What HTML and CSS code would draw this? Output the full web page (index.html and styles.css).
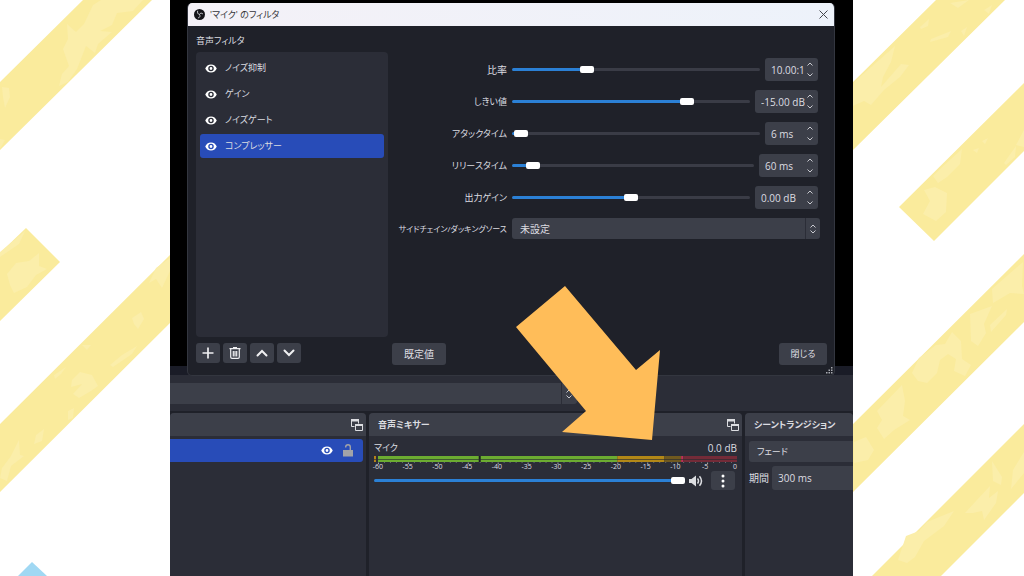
FILE: index.html
```html
<!DOCTYPE html>
<html lang="ja">
<head>
<meta charset="utf-8">
<meta name="viewport" content="width=device-width, initial-scale=1">
<title>音声フィルタ</title>
<link rel="stylesheet" href="styles.css">
</head>
<body>
<svg class="defs" aria-hidden="true">
  <symbol id="eye" viewBox="0 0 24 18"><path fill="currentColor" fill-rule="evenodd" d="M12 1C6.500 1 2.300 4.300.5 9c1.800 4.700 6 8 11.500 8s9.700-3.300 11.500-8C21.700 4.300 17.500 1 12 1Zm0 13.500a5.500 5.500 0 1 1 0-11 5.500 5.500 0 0 1 0 11Zm0-2.700a2.800 2.800 0 1 0 0-5.600 2.800 2.800 0 0 0 0 5.600Z"/></symbol>
  <symbol id="up" viewBox="0 0 12 8"><path d="M1.500 6.500 6 2l4.500 4.500" fill="none" stroke="currentColor" stroke-width="2" stroke-linecap="round"/></symbol>
  <symbol id="down" viewBox="0 0 12 8"><path d="M1.500 1.500 6 6l4.500-4.500" fill="none" stroke="currentColor" stroke-width="2" stroke-linecap="round"/></symbol>
  <symbol id="popout" viewBox="0 0 12 12"><path fill="none" stroke="currentColor" d="M3.500 7.500h-3v-6h7v3M4.500 5.500h7v6h-7z"/><path fill="currentColor" d="M0 0h8v2.500H0zM4 5h8v2H4z"/></symbol>
</svg>

<svg class="backdrop" viewBox="0 0 1024 576" preserveAspectRatio="none" aria-hidden="true">
  <g class="stripe">
    <path d="M83 0h69L0 150V82ZM0 253l26-25 34 34-60 59ZM0 424l171-170v68L0 492Z"/>
    <path d="M936 0h69L852 151V83ZM1024 83 899 207l35 34 90-90ZM852 425l172-171v68L852 493ZM872 576l152-152v69l-83 83Z"/>
  </g>
  <g class="fleck">
    <path d="M93 5l8-5h42l-10 11-16 2-5 12-12 6 12 1-14 12-3 9-9-7-9 23-9 13-9 4 3-12 7-8-6-17 5-10-1-15 9 8 8-8Z"/>
    <path d="M2 87l7 1 1 9-5 11-2-11ZM0 139l5 1-5 9ZM0 252l25-21-6 13-19 13ZM7 274l9-11 13-2 10-8 0 13 8 3-11 6-9 12-13 6-4-8Z"/>
    <path d="M170 258v13l-8 17-6-9-7 4 7-15ZM132 318l9-6 3 7-6 10-4-5ZM110 365l12-10 15-9-5 8-19 13ZM72 380l8-8 12 3 6 11-7 5-12 7-6-4 9-10-11 3ZM54 375l12-8-5 7-6 5ZM82 345l9 0-4 5ZM68 411l6-3-1 10-5 2ZM36 435l8-6-2 12-8 3ZM2 468l9-12 8-16 1 15 4 1-13 10-4 15-7-3Z"/>
    <path d="M950 3l19-3-11 8ZM984 10l8-5-3 9ZM920 27l9-8-1 7-7 3ZM931 39l20-8-3 6-18 5ZM961 31l6-4-3 9ZM854 82l41-36-4 16-8 15-2 10 20-23 8 1-9 12-16 13-13 15-7-4-16 7Z"/>
    <path d="M940 169l22-20-2 15-13 13-9 6-5-7ZM982 141l6-3-3 6ZM973 150l6-2-2 5ZM1004 163l12-17-1 11-9 8ZM1016 145l8-15v17ZM924 190l11-3 12 6-1 19-10 9-13-7 7-13Z"/>
    <path d="M992 289l31-27-1 24 2 8-14-1-17 10ZM970 314l22-8-8 18 2 9-8 13-7-5ZM990 325l17-16-1 6-15 17ZM952 332l9 9 1 18 9 6-6 11-11-5 2-12-8-5-8 6-3 13-10 10-9-2-6-8 7-15 17-13 9-1ZM877 411l25-26 3 16-2 15 7 4-16 10-10 9-7-11 5-8ZM854 442l12-5 8 13-6 10-14 3Z"/>
    <path d="M898 560l8-24 13-5 8-9 27-11-10 15-20 15-9 16-8 6ZM965 513l11-12 14-15-1 12 9-7-2 12-12 17-2-9-9 2ZM992 461l10 16-1 8-8-4ZM1013 470l11-18v21l-13 16Z"/>
  </g>
  <path class="gem" d="m32 562 15 14H18Z"/>
</svg>

<main class="desktop">
  <section class="studio" aria-label="OBS">
    <div class="context-bar">
      <div class="source-field"></div>
      <button class="source-arrows" aria-label="選択"><svg class="chev"><use href="#up"/></svg><svg class="chev"><use href="#down"/></svg></button>
    </div>
    <div class="docks">
      <section class="dock" aria-label="ソース">
        <header class="dock-head"><span></span><button class="pop" aria-label="切り離す"><svg class="pop-icon"><use href="#popout"/></svg></button></header>
        <div class="source-row">
          <svg class="eye"><use href="#eye"/></svg>
          <svg class="lock" viewBox="0 0 10 13"><path fill="currentColor" d="M0 6h10v6.500H0z"/><path d="M2.700 3.500V3a2.300 2.300 0 0 1 4.600 0v3" fill="none" stroke="currentColor" stroke-width="1.400"/></svg>
        </div>
      </section>
      <section class="dock" aria-label="音声ミキサー">
        <header class="dock-head"><h2 class="dock-title">音声ミキサー</h2><button class="pop" aria-label="切り離す"><svg class="pop-icon"><use href="#popout"/></svg></button></header>
        <div class="channel">
          <div class="channel-top"><label class="kana" for="vol">マイク</label><span>0.0 dB</span></div>
          <svg class="meter" viewBox="0 0 364 9" preserveAspectRatio="none" aria-hidden="true">
            <path fill="#b7821a" d="M0 0h2v6H0z"/><path fill="#6cac31" d="M4 0h240v6H4z"/><path fill="#b38817" d="M244 0h47v6h-47z"/><path fill="#70591f" d="M291 0h17v6h-17z"/><path fill="#bd3157" d="M308 0h2v6h-2z"/><path fill="#742b38" d="M310 0h54v6h-54z"/>
            <path fill="#1b1d20" d="M105 0h2v6h-2z"/><path stroke="#282b31" stroke-opacity=".65" d="M0 3.500h364"/>
            <path stroke="#a6a8ad" stroke-dasharray="1 29" d="M4 7.500h360"/><path stroke="#666973" stroke-dasharray="1 5" d="M4 6.500h360"/>
          </svg>
          <div class="scale"><span>-60</span><span>-55</span><span>-50</span><span>-45</span><span>-40</span><span>-35</span><span>-30</span><span>-25</span><span>-20</span><span>-15</span><span>-10</span><span>-5</span><span>0</span></div>
          <div class="volume">
            <input class="slider" id="vol" type="range" value="100" style="--v:100">
            <svg class="speaker" viewBox="0 0 14 12"><path fill="currentColor" d="M0 4h2.500L7 .5v11L2.500 8H0z"/><path fill="none" stroke="currentColor" stroke-width="1.500" d="M8.500 3.500q2 2.500 0 5M10.500 1.200q4 4.800 0 9.600"/></svg>
            <button class="more" aria-label="メニュー"><svg class="dots" viewBox="0 0 4 14"><circle cx="2" cy="2" r="1.500"/><circle cx="2" cy="7" r="1.500"/><circle cx="2" cy="12" r="1.500"/></svg></button>
          </div>
        </div>
      </section>
      <section class="dock" aria-label="シーントランジション">
        <header class="dock-head"><h2 class="dock-title">シーントランジション</h2></header>
        <div class="transition">
          <select class="fade" aria-label="トランジション"><option>フェード</option></select>
          <div class="duration"><label for="dur">期間</label><input id="dur" class="dur-box" type="text" value="300 ms"></div>
        </div>
      </section>
    </div>
  </section>

  <section class="dialog" role="dialog" aria-labelledby="dlg-title">
    <header class="titlebar">
      <svg class="logo" viewBox="0 0 24 24"><circle cx="12" cy="12" r="12" fill="#15151a"/><g fill="none" stroke="#e8e8ee" stroke-width="1.800"><path d="M8 4c-1 4 0 7 4 8"/><path d="M19.500 11c-3-3-6-2.500-7.500 1"/><path d="M9 19.500c4-1 5-4 3-7.500"/></g></svg>
      <h1 class="dlg-title" id="dlg-title">'マイク' のフィルタ</h1>
      <button class="close-x" aria-label="閉じる"><svg class="x-icon" viewBox="0 0 9 9"><path d="m.5.5 8 8m0-8-8 8" stroke="currentColor" fill="none"/></svg></button>
    </header>
    <div class="dlg-body">
      <div class="filters">
        <h2 class="filters-title">音声フィルタ</h2>
        <ul class="filter-list">
          <li class="filter"><svg class="eye"><use href="#eye"/></svg>ノイズ抑制</li>
          <li class="filter"><svg class="eye"><use href="#eye"/></svg>ゲイン</li>
          <li class="filter"><svg class="eye"><use href="#eye"/></svg>ノイズゲート</li>
          <li class="filter selected"><svg class="eye"><use href="#eye"/></svg>コンプレッサー</li>
        </ul>
        <div class="tools">
          <button class="tool" aria-label="追加"><svg class="tool-icon" viewBox="0 0 12 12"><path d="M6 .5v11M.5 6h11" stroke="currentColor" stroke-width="1.700"/></svg></button>
          <button class="tool" aria-label="削除"><svg class="tool-icon" viewBox="0 0 12 12"><path d="M.5 1.700h11M4 .7h4M1.700 2v8q0 1.300 1.300 1.300h6q1.300 0 1.300-1.300V2M4.300 4v5.500M6 4v5.500M7.700 4v5.500" fill="none" stroke="currentColor" stroke-width="1.200"/></svg></button>
          <button class="tool" aria-label="上へ"><svg class="tool-chev"><use href="#up"/></svg></button>
          <button class="tool" aria-label="下へ"><svg class="tool-chev"><use href="#down"/></svg></button>
        </div>
      </div>
      <div class="settings">
        <form class="form">
          <label class="name" for="ratio">比率</label>
          <div class="control"><input class="slider" id="ratio" type="range" value="29" style="--v:29"><div class="spin"><input class="spin-box w-s" type="text" value="10.00:1" aria-label="比率の値"><span class="steps"><button type="button" class="step" aria-label="増"><svg class="chev"><use href="#up"/></svg></button><button type="button" class="step" aria-label="減"><svg class="chev"><use href="#down"/></svg></button></span></div></div>
          <label class="name kana" for="thr">しきい値</label>
          <div class="control"><input class="slider" id="thr" type="range" value="75" style="--v:75"><div class="spin"><input class="spin-box w-l" type="text" value="-15.00 dB" aria-label="しきい値の値"><span class="steps"><button type="button" class="step" aria-label="増"><svg class="chev"><use href="#up"/></svg></button><button type="button" class="step" aria-label="減"><svg class="chev"><use href="#down"/></svg></button></span></div></div>
          <label class="name kana" for="att">アタックタイム</label>
          <div class="control"><input class="slider" id="att" type="range" value="1" style="--v:1"><div class="spin"><input class="spin-box w-s" type="text" value="6 ms" aria-label="アタックタイムの値"><span class="steps"><button type="button" class="step" aria-label="増"><svg class="chev"><use href="#up"/></svg></button><button type="button" class="step" aria-label="減"><svg class="chev"><use href="#down"/></svg></button></span></div></div>
          <label class="name kana" for="rel">リリースタイム</label>
          <div class="control"><input class="slider" id="rel" type="range" value="6" style="--v:6"><div class="spin"><input class="spin-box w-m" type="text" value="60 ms" aria-label="リリースタイムの値"><span class="steps"><button type="button" class="step" aria-label="増"><svg class="chev"><use href="#up"/></svg></button><button type="button" class="step" aria-label="減"><svg class="chev"><use href="#down"/></svg></button></span></div></div>
          <label class="name kana" for="out">出力ゲイン</label>
          <div class="control"><input class="slider" id="out" type="range" value="50" style="--v:50"><div class="spin"><input class="spin-box w-l" type="text" value="0.00 dB" aria-label="出力ゲインの値"><span class="steps"><button type="button" class="step" aria-label="増"><svg class="chev"><use href="#up"/></svg></button><button type="button" class="step" aria-label="減"><svg class="chev"><use href="#down"/></svg></button></span></div></div>
          <label class="name long" for="side">サイドチェイン/ダッキングソース</label>
          <div class="combo"><select class="combo-box" id="side"><option>未設定</option></select><span class="combo-arrows"><svg class="chev"><use href="#up"/></svg><svg class="chev"><use href="#down"/></svg></span></div>
        </form>
        <div class="actions"><button class="btn wide">既定値</button><button class="btn kana">閉じる</button></div>
      </div>
    </div>
    <svg class="grip" viewBox="0 0 7 7"><path fill="#a9abb2" d="M5 0h1.500v1.500H5zM5 2.500h1.500V4H5zM2.500 2.500H4V4H2.500zM5 5h1.500v1.500H5zM2.500 5H4v1.500H2.500zM0 5h1.500v1.500H0z"/></svg>
  </section>

  <svg class="pointer" viewBox="0 0 145 154" aria-hidden="true"><path fill="#ffbd59" d="m49 0 71 84 24-20-8 90-90-8 24-21L0 41Z"/></svg>
</main>
</body>
</html>
```
FILE: styles.css
```css
:root {
  --ink: #dcdde1;
  --base: #1f2129;
  --panel: #2b2d37;
  --raised: #3c3f49;
  --select: #284cb8;
  --accent: #2b80d5;
}
* { box-sizing: border-box; }
body {
  margin: 0;
  min-height: 100vh;
  background: #fff;
  color: var(--ink);
  font: 10px/14px "Open Sans", "Noto Sans CJK JP", sans-serif;
  font-feature-settings: "palt";
  overflow: hidden;
}
button, input, select {
  margin: 0;
  padding: 0;
  border: 0;
  background: none;
  color: inherit;
  font: inherit;
  font-feature-settings: inherit;
  appearance: none;
  outline: 0;
  border-radius: 0;
}
h1, h2, ul { margin: 0; padding: 0; font-size: 9px; font-weight: 400; list-style: none; }
svg { display: block; flex: none; }
.kana { font-size: 9px; }
.defs { position: absolute; width: 0; height: 0; }
.backdrop { position: absolute; inset: 0; width: 100%; height: 100%; }
.stripe { fill: #faeb9c; }
.fleck { fill: #fbeeaa; }
.gem { fill: #a0d8f3; }

.desktop {
  position: relative;
  width: 66.7%;
  height: 100vh;
  margin-left: 16.6%;
  background: #000;
  overflow: hidden;
}

/* main window */
.studio {
  position: absolute;
  inset: 366px 0 0;
  display: flex;
  flex-direction: column;
  background: var(--base);
  border-top: 9px solid #1a1c27;
}
.context-bar { display: flex; gap: 1px; padding: 8px 0 7px; background: var(--panel); }
.source-field { width: 391px; height: 21px; background: var(--raised); }
.source-arrows {
  width: 15px;
  background: var(--raised);
  border-radius: 0 3px 3px 0;
  display: grid;
  place-content: center;
  gap: 2px;
}
.docks { flex: 1; display: grid; grid-template-columns: 196px 1fr 108px; gap: 3px; padding-top: 2px; }
.dock { background: var(--panel); border-radius: 4px 4px 0 0; min-width: 0; overflow: hidden; }
.dock-head {
  display: flex;
  align-items: center;
  justify-content: space-between;
  height: 23px;
  padding: 0 3px 0 9px;
  background: var(--raised);
}
.dock-title { font-weight: 700; white-space: nowrap; }
.pop-icon { width: 12px; height: 12px; }
.source-row {
  display: flex;
  align-items: center;
  justify-content: flex-end;
  gap: 10px;
  height: 23px;
  margin: 3px 3px 0 0;
  padding-right: 10px;
  background: var(--select);
  border-radius: 0 3px 3px 0;
  color: #fff;
}
.eye { width: 12px; height: 9px; }
.lock { width: 10px; height: 13px; color: #a2a3a8; }
.channel { padding: 5px 5px 0; }
.channel-top { display: flex; justify-content: space-between; }
.meter { width: 100%; height: 9px; margin-top: 1px; }
.scale {
  display: flex;
  justify-content: space-between;
  padding: 0 2px 0 4px;
  font-size: 7px;
  line-height: 4px;
}
.scale span { width: 0; display: flex; justify-content: center; }
.volume { display: flex; align-items: center; margin-top: 2px; padding-right: 2px; }
.speaker { width: 14px; height: 12px; margin: 0 8px 0 4px; }
.more { width: 24px; height: 19px; background: var(--raised); border-radius: 3px; display: grid; place-items: center; }
.dots { width: 4px; height: 14px; fill: #fff; }
.transition { padding: 5px 0 0 4px; }
.fade { display: block; width: 100%; height: 21px; padding-left: 8px; background: var(--raised); border-radius: 3px 0 0 3px; font-size: 9px; }
.duration { display: flex; align-items: center; gap: 3px; margin-top: 4px; }
.duration label { flex: none; }
.dur-box { flex: 1; min-width: 0; height: 24px; padding-left: 6px; background: var(--raised); border-radius: 3px 0 0 3px; }

/* slider */
.slider {
  --pos: calc(7px + (100% - 14px) * var(--v) / 100);
  flex: 1;
  min-width: 0;
  height: 14px;
}
.slider::-webkit-slider-runnable-track {
  height: 3px;
  border-radius: 2px;
  background: linear-gradient(var(--accent), var(--accent)) 0 0 / var(--pos) 100% no-repeat #3a3c46;
}
.slider::-webkit-slider-thumb {
  appearance: none;
  width: 14px;
  height: 7px;
  margin-top: -2px;
  background: #fff;
  border-radius: 2px;
}

/* filter dialog */
.dialog {
  position: absolute;
  top: 3px;
  left: 17px;
  right: 18px;
  height: 373px;
  display: flex;
  flex-direction: column;
  background: var(--base);
  border: 1px solid #33363f;
  border-top: 0;
  border-radius: 5px;
  overflow: hidden;
}
.titlebar {
  display: flex;
  align-items: center;
  gap: 5px;
  height: 23px;
  padding: 0 6px 0 6px;
  background: linear-gradient(90deg, #f4f1f7, #edf2fa);
  color: #33343a;
}
.logo { width: 11px; height: 11px; }
.dlg-title { flex: 1; }
.x-icon { width: 9px; height: 9px; color: #44464d; }
.dlg-body { flex: 1; display: grid; grid-template-columns: 192px 1fr; gap: 4px; padding: 8px 7px 10px 8px; }
.filters { display: flex; flex-direction: column; }
.filters-title { height: 18px; }
.filter-list {
  flex: 1;
  display: flex;
  flex-direction: column;
  gap: 2px;
  padding: 4px;
  background: var(--panel);
  border-radius: 4px;
}
.filter { display: flex; align-items: center; gap: 8px; height: 24px; padding-left: 5px; border-radius: 3px; }
.filter .eye { color: #fff; }
.selected { background: var(--select); }
.tools { display: flex; gap: 3px; margin: 6px 0 2px; }
.tool { width: 24px; height: 20px; background: var(--raised); border-radius: 3px; display: grid; place-items: center; color: #f0f0f2; }
.tool-icon { width: 12px; height: 12px; }
.tool-chev { width: 12px; height: 8px; }
.settings { display: flex; flex-direction: column; justify-content: space-between; }
.form {
  display: grid;
  grid-template-columns: 115px 1fr;
  gap: 9px 5px;
  align-items: center;
  padding: 24px 7px 0 0;
}
.name { text-align: right; white-space: nowrap; }
.long { font-size: 8px; }
.control { display: flex; align-items: center; gap: 5px; padding-right: 2px; }
.spin { display: flex; align-items: center; height: 23px; padding: 0 5px 0 6px; background: var(--raised); border-radius: 3px; }
.spin-box { height: 20px; }
.w-s { width: 36px; }
.w-m { width: 42px; }
.w-l { width: 46px; }
.steps { display: grid; gap: 6px; }
.step { width: 6px; height: 5px; display: grid; place-items: center; }
.chev { width: 6px; height: 4px; color: #c9cad0; }
.combo { display: flex; height: 21px; background: var(--raised); border-radius: 3px; }
.combo-box { flex: 1; padding-left: 8px; }
.combo-arrows { width: 15px; display: grid; place-content: center; gap: 2px; border-left: 1px solid #2b2d37; }
.actions { display: flex; justify-content: space-between; align-items: center; }
.btn { width: 48px; height: 22px; background: var(--raised); border-radius: 3px; }
.wide { width: 54px; }
.grip { position: absolute; right: 1px; bottom: 1px; width: 7px; height: 7px; }
.pointer { position: absolute; left: 346px; top: 286px; width: 145px; height: 154px; }
```
